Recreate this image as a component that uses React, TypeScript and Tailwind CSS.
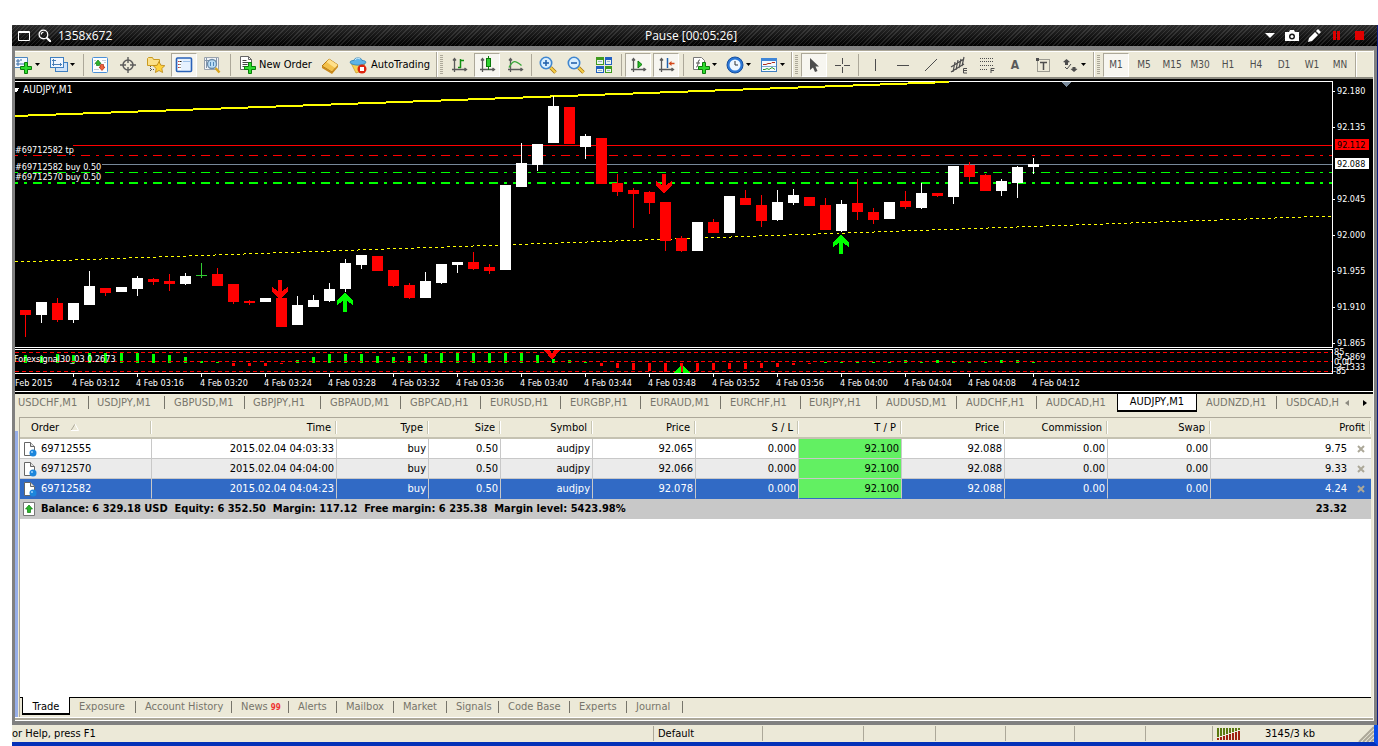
import type { ReactNode } from 'react';
import clsx from 'clsx';

type Tone = 'w' | 'r' | 'g';

// tone, body top, body bottom, wick top, wick bottom
const candles: [Tone, number, number, number, number][] = [
  ['r', 310, 315, 310, 337],
  ['w', 302, 315, 302, 323],
  ['r', 303, 320, 298, 322],
  ['w', 303, 320, 303, 323],
  ['w', 286, 305, 271, 305],
  ['r', 288, 293, 288, 296],
  ['w', 287, 292, 287, 292],
  ['w', 278, 289, 276, 296],
  ['r', 279, 282, 278, 285],
  ['r', 281, 284, 274, 291],
  ['w', 276, 284, 273, 285],
  ['g', 275, 276, 263, 278],
  ['r', 274, 286, 268, 286],
  ['r', 284, 302, 284, 304],
  ['r', 301, 303, 300, 305],
  ['w', 298, 302, 298, 302],
  ['r', 298, 327, 298, 327],
  ['w', 305, 325, 296, 325],
  ['w', 300, 307, 295, 307],
  ['w', 289, 301, 283, 302],
  ['w', 263, 289, 259, 292],
  ['w', 255, 265, 255, 269],
  ['r', 256, 271, 256, 271],
  ['r', 270, 286, 270, 287],
  ['r', 285, 298, 283, 299],
  ['w', 281, 298, 272, 298],
  ['w', 264, 283, 264, 284],
  ['w', 262, 265, 262, 273],
  ['r', 262, 269, 252, 270],
  ['r', 267, 271, 264, 274],
  ['w', 185, 270, 185, 270],
  ['w', 163, 187, 143, 187],
  ['w', 144, 165, 144, 171],
  ['w', 106, 143, 96, 143],
  ['r', 107, 144, 107, 144],
  ['w', 136, 147, 134, 159],
  ['r', 138, 184, 138, 184],
  ['r', 183, 192, 174, 196],
  ['r', 190, 194, 188, 228],
  ['r', 192, 203, 191, 214],
  ['r', 202, 241, 202, 251],
  ['r', 238, 251, 236, 252],
  ['w', 222, 251, 222, 251],
  ['r', 222, 233, 219, 233],
  ['w', 196, 233, 196, 233],
  ['r', 198, 205, 190, 205],
  ['r', 205, 221, 195, 227],
  ['w', 202, 220, 190, 221],
  ['w', 195, 203, 189, 205],
  ['r', 197, 206, 197, 206],
  ['r', 205, 230, 198, 230],
  ['w', 204, 231, 200, 232],
  ['r', 203, 212, 179, 220],
  ['r', 212, 220, 208, 224],
  ['w', 202, 219, 202, 219],
  ['r', 201, 207, 191, 209],
  ['w', 193, 208, 183, 209],
  ['r', 193, 196, 193, 197],
  ['w', 166, 197, 166, 204],
  ['r', 165, 177, 162, 182],
  ['r', 175, 191, 174, 191],
  ['w', 181, 191, 179, 196],
  ['w', 167, 183, 166, 198],
  ['w', 164, 167, 158, 174],
];

// height of each histogram bar, positive is above the zero line
const histogram = [
  8, 7, 9, 8, 10, 10, 10, 10, 9, 8, 6, 2, 1, -3, -3, -3, -1, 3, 6, 9, 9, 9, 7, 6, 7, 9, 10, 10, 10, 10, 10, 10,
  8, 4, 3, 1, -3, -5, -7, -8, -9, -9, -8, -7, -6, -6, -5, -4, -2, -1, 1, 1, 1, 1, 1, 3, 1, 3, 2, 1, 1, 3, 3, 1,
];

const toneColor: Record<Tone, string> = { w: '#ffffff', r: '#ff0000', g: '#32cd32' };

const times = [
  '03:12', '03:16', '03:20', '03:24', '03:28', '03:32', '03:36', '03:40',
  '03:44', '03:48', '03:52', '03:56', '04:00', '04:04', '04:08', '04:12',
];

const prices: [string, number][] = [
  ['92.180', 91],
  ['92.135', 127],
  ['92.045', 199],
  ['92.000', 235],
  ['91.955', 271],
  ['91.910', 307],
  ['91.865', 343],
];

const symbols = [
  'USDCHF,M1', 'USDJPY,M1', 'GBPUSD,M1', 'GBPJPY,H1', 'GBPAUD,M1', 'GBPCAD,H1', 'EURUSD,H1', 'EURGBP,H1',
  'EURAUD,M1', 'EURCHF,H1', 'EURJPY,H1', 'AUDUSD,M1', 'AUDCHF,H1', 'AUDCAD,H1', 'AUDJPY,M1', 'AUDNZD,H1',
];

const columns: [string, string][] = [
  ['Order', 'w-[132px]'],
  ['Time', 'w-[185px]'],
  ['Type', 'w-[92px]'],
  ['Size', 'w-[72px]'],
  ['Symbol', 'w-[92px]'],
  ['Price', 'w-[103px]'],
  ['S / L', 'w-[103px]'],
  ['T / P', 'w-[103px]'],
  ['Price', 'w-[103px]'],
  ['Commission', 'w-[103px]'],
  ['Swap', 'w-[103px]'],
  ['Profit', ''],
];

const orders = [
  ['69712555', '2015.02.04 04:03:33', 'buy', '0.50', 'audjpy', '92.065', '0.000', '92.100', '92.088', '0.00', '0.00', '9.75'],
  ['69712570', '2015.02.04 04:04:00', 'buy', '0.50', 'audjpy', '92.066', '0.000', '92.100', '92.088', '0.00', '0.00', '9.33'],
  ['69712582', '2015.02.04 04:04:23', 'buy', '0.50', 'audjpy', '92.078', '0.000', '92.100', '92.088', '0.00', '0.00', '4.24'],
];

const terminalTabs: [string, string][] = [
  ['Exposure', 'w-[66px]'],
  ['Account History', 'w-[96px]'],
  ['News', 'w-[57px]'],
  ['Alerts', 'w-[48px]'],
  ['Mailbox', 'w-[57px]'],
  ['Market', 'w-[53px]'],
  ['Signals', 'w-[52px]'],
  ['Code Base', 'w-[71px]'],
  ['Experts', 'w-[57px]'],
  ['Journal', 'w-[56px]'],
];

/* ---------- toolbar icons, 18x18 ---------- */

function Svg({ children }: { children: ReactNode }) {
  return (
    <svg width="18" height="18" viewBox="0 0 18 18" fill="none" className="shrink-0" aria-hidden="true">
      {children}
    </svg>
  );
}

const Plus = () => (
  <path d="M10.500 6.500h3v4h4v3h-4v4h-3v-4h-4v-3h4z" fill="#2fdc2f" stroke="#0a7d0a" />
);

const NewChartIcon = () => (
  <Svg>
    <path d="M0 1.500h12.500v10H0" fill="#f4f9ff" stroke="#4a86c0" />
    <path d="M3 3v7M1 8h9M6 3v2M1 5h4" stroke="#3c6ea5" />
    <g transform="translate(-1 0)"><Plus /></g>
  </Svg>
);

const ProfilesIcon = () => (
  <Svg>
    <rect x="5.500" y="6.500" width="12" height="9" fill="#cfe3f8" stroke="#3f7fc0" />
    <rect x="0.500" y="1.500" width="13" height="10" fill="#f2f8ff" stroke="#3f7fc0" />
    <path d="M1 11h12v1H1z" fill="#3f7fc0" />
    <path d="M3.500 3v7M2 8.500h10M10.500 7v3M2 4.500h4" stroke="#4a7fb5" />
  </Svg>
);

const MarketWatchIcon = () => (
  <Svg>
    <rect x="1.500" y="1.500" width="15" height="15" rx="1" fill="#fdfeff" stroke="#4a90d9" />
    <path d="M3 4.500h2M3 8.500h1M3 13.500h5M11 4.500h4M13 6.500h2" stroke="#c3cdd8" />
    <path d="M7 4l3 3.500H8.500v2h-3v-2H4z" fill="#2cb52c" stroke="#127a12" strokeWidth=".7" />
    <path d="M11 14.500l3-3.500h-1.500V8.500h-3V11H8z" fill="#f0643c" stroke="#b02a10" strokeWidth=".7" />
  </Svg>
);

const CrosshairIcon = () => (
  <Svg>
    <circle cx="9" cy="9" r="5" stroke="#5c5c5c" strokeWidth="1.500" />
    <path d="M9 1v6M9 11v6M1 9h6M11 9h6" stroke="#5c5c5c" strokeWidth="1.400" />
  </Svg>
);

const NavigatorIcon = () => (
  <Svg>
    <path d="M.5 9.500v-7l1-1h4l1 2h6v6z" fill="#fbe08a" stroke="#c99a20" />
    <path d="M3.500 10v6M4 13.500h4" stroke="#555" strokeDasharray="1 1" />
    <path d="M12 5.500l1.800 3.700 4 .5-3 2.800.8 4-3.600-2-3.600 2 .8-4-3-2.800 4-.5z" fill="#ffd23c" stroke="#b98410" strokeWidth=".8" />
  </Svg>
);

const TerminalIcon = () => (
  <Svg>
    <rect x="1.500" y="2" width="15" height="13.500" rx="1" fill="#e6f2ff" stroke="#2a62b8" strokeWidth="1.600" />
    <rect x="3" y="4" width="3" height="10" fill="#fff" />
    <path d="M3 5.500h1M3 8.500h1M3 11.500h1" stroke="#d33" />
    <path d="M4.500 5.500h2M4.500 8.500h1M4.500 11.500h1" stroke="#222" />
    <path d="M8 5.500h7" stroke="#9ec2ea" />
  </Svg>
);

const TesterIcon = () => (
  <Svg>
    <path d="M1.500 1.500h14v12h-14z" fill="#f2f4f7" stroke="#9aa3ad" />
    <path d="M3.500 2v10M2 4.500h4M13.500 2v8" stroke="#8296ab" />
    <circle cx="9" cy="8" r="4.500" fill="#b9dcf6" stroke="#6b8ba8" strokeWidth="1.300" />
    <path d="M7.500 6v4M10.500 6v4" stroke="#4f87b9" />
    <path d="M12.500 12l4 4.500" stroke="#d8a41c" strokeWidth="2.500" />
  </Svg>
);

const NewOrderIcon = () => (
  <Svg>
    <path d="M2.500.5h8l3 3v10h-11z" fill="#fff" stroke="#666" />
    <path d="M10.500.5v3h3" stroke="#666" />
    <path d="M4.500 4.500h4M4.500 6.500h7M4.500 8.500h5M4.500 10.500h3" stroke="#444" />
    <Plus />
  </Svg>
);

const EditorIcon = () => (
  <Svg>
    <path d="M1 10l7-7 9 6-6 7z" fill="#f3c14b" stroke="#b47812" />
    <path d="M8 3l9 6-3 3-8.500-6z" fill="#ffe08a" />
    <path d="M1 10l10 6 6-7v2l-6 7-10-6z" fill="#c98a1b" />
  </Svg>
);

const AutoTradingIcon = () => (
  <Svg>
    <path d="M2 7h14l-3 8-6 2z" fill="#f7d155" stroke="#c89a1c" strokeWidth=".7" />
    <path d="M1 6.500c0-2 3-2 4-2C5 1 13 1 13 4.500c2 0 4 .5 4 2C15 10 3 10 1 6.500z" fill="#5fb3e6" stroke="#2d7fb6" strokeWidth=".8" />
    <path d="M6 4c1-2 4-2 5-1" stroke="#c9ebff" />
    <circle cx="13" cy="13" r="4.500" fill="#dd2510" />
    <rect x="11" y="11" width="4" height="4" fill="#fff" />
  </Svg>
);

const Axes = () => (
  <path d="M4.500 3v13M2 13.500h14M3 4.500l1.500-2L6 4.500M14.500 12l2 1.500-2 1.500" stroke="#5a5a5a" strokeWidth="1.300" />
);

const BarChartIcon = () => (
  <Svg>
    <Axes />
    <path d="M10.500 3v9M10 4.500h4M8 11.500h3" stroke="#129012" strokeWidth="1.500" />
  </Svg>
);

const CandleChartIcon = () => (
  <Svg>
    <Axes />
    <path d="M10.500 0v14" stroke="#0b7a0b" />
    <rect x="8.500" y="2.500" width="4" height="8" fill="#2ed02e" stroke="#0b7a0b" />
  </Svg>
);

const LineChartIcon = () => (
  <Svg>
    <Axes />
    <path d="M3 11.500C7 4 9 4 15.500 9.500" stroke="#3aa83a" strokeWidth="1.400" />
  </Svg>
);

const ZoomIcon = ({ plus }: { plus?: boolean }) => (
  <Svg>
    <path d="M11.500 11.500l5 5" stroke="#a87410" strokeWidth="3.500" />
    <path d="M11.500 11.500l5 5" stroke="#f5d04a" strokeWidth="2" />
    <circle cx="7" cy="7" r="5.700" fill="#d9efff" stroke="#3f86cf" strokeWidth="1.600" />
    <path d="M4 7h6" stroke="#2563ad" strokeWidth="1.600" />
    {plus && <path d="M7 4v6" stroke="#2563ad" strokeWidth="1.600" />}
  </Svg>
);

const TileIcon = () => (
  <Svg>
    <path d="M1 1h8v8H1zM10 10h7v7h-7z" fill="#3f9a1e" />
    <path d="M10 1h7v8h-7zM1 10h8v7H1z" fill="#2160c0" />
    <path d="M2 4h6v4H2zM11 4h5v4h-5zM2 13h6v3H2zM11 13h5v3h-5z" fill="#edf6ee" />
    <path d="M3 5.500h4M12 5.500h3M3 14.500h4M12 14.500h3" stroke="#9ab6c8" />
  </Svg>
);

const AutoScrollIcon = () => (
  <Svg>
    <Axes />
    <path d="M9 5l4 3.500L9 12z" fill="#2cc02c" stroke="#0b7a0b" />
  </Svg>
);

const ShiftIcon = () => (
  <Svg>
    <Axes />
    <path d="M10.500 2v10" stroke="#1d62b0" strokeWidth="1.500" />
    <path d="M11.500 7.500l3-2.500v1.800h3v1.500h-3V10z" fill="#d4491a" />
  </Svg>
);

const IndicatorsIcon = () => (
  <Svg>
    <path d="M1.500 1.500h8l3 3v9h-11z" fill="#fff" stroke="#777" />
    <path d="M8 4c-3-1-1 8-4 7M4 7h4" stroke="#555" />
    <Plus />
  </Svg>
);

const ClockIcon = () => (
  <Svg>
    <circle cx="9" cy="9" r="8" fill="#2b78d8" stroke="#174f9e" />
    <circle cx="9" cy="9" r="5.500" fill="#eef6ff" />
    <path d="M9 5v4h3" stroke="#333" />
  </Svg>
);

const TemplateIcon = () => (
  <Svg>
    <rect x="1.500" y="2.500" width="15" height="13" fill="#f6fbff" stroke="#3f7fc0" />
    <path d="M1 2h16v3H1z" fill="#3f86d8" />
    <path d="M3 8.500h3l2-1h3l1-1h3" stroke="#b03020" />
    <path d="M3 13.500h2l2-1 2 1 3-2 3 2" stroke="#2a9a2a" />
    <path d="M2 10.500h14" stroke="#7fa9d2" />
  </Svg>
);

const CursorIcon = () => (
  <Svg>
    <path d="M5 2v12l3-2.500 2 4.500 2.500-1-2-4.500H14z" fill="#4d4d4d" />
  </Svg>
);

const CrossIcon = () => (
  <Svg>
    <path d="M9.500 2v6M9.500 11v6M2 9.500h6M11 9.500h6" stroke="#4d4d4d" />
  </Svg>
);

const ChannelIcon = () => (
  <Svg>
    <path d="M1 11L14 3M1 16L14 8M5 6L3 16M8 4L6 14M11 3L9 12M14 1l-2 9" stroke="#4d4d4d" strokeWidth="1.200" />
    <path d="M17 12.500h-3.500v4.500H17M14 14.500h3" stroke="#4d4d4d" />
  </Svg>
);

const FiboIcon = () => (
  <Svg>
    <path d="M2 2.500h14M2 5.500h14M2 9.500h14M2 13.500h8" stroke="#4d4d4d" strokeDasharray="1 1" />
    <path d="M16.500 12.500h-3.500V17M13 14.500h3" stroke="#4d4d4d" />
  </Svg>
);

const LabelIcon = () => (
  <Svg>
    <rect x="3.500" y="3.500" width="12" height="12" stroke="#4d4d4d" strokeDasharray="1 1" />
    <path d="M2 2h3v3H2z" fill="#4d4d4d" />
    <path d="M6 6.500h7M9.500 6v8" stroke="#4d4d4d" strokeWidth="1.500" />
  </Svg>
);

const ArrowsIcon = () => (
  <Svg>
    <path d="M5.500 3l3.500 3-2 .5V9H4V6.500L2 6z" fill="#4d4d4d" />
    <path d="M13 16l3.500-3-2-.5V11h-3v1.500l-2 .5z" fill="#4d4d4d" />
    <path d="M4 11l2 2 4-5" stroke="#4d4d4d" />
  </Svg>
);

/* ---------- toolbar parts ---------- */

const pressedClass =
  'border border-[#aca899] border-r-white border-b-white bg-[#f7f6f0]';

function Tool({ label, pressed, children }: { label: string; pressed?: boolean; children: ReactNode }) {
  return (
    <button
      type="button"
      aria-label={label}
      aria-pressed={pressed}
      className={clsx('flex h-[24px] items-center justify-center', pressed ? ['mx-px w-[26px]', pressedClass] : 'w-7')}
    >
      {children}
    </button>
  );
}

function DropTool({ label, className, children }: { label: string; className?: string; children: ReactNode }) {
  return (
    <button type="button" aria-label={label} className={clsx('flex h-[24px] shrink-0 items-center gap-[2px]', className)}>
      {children}
      <svg width="5" height="3" viewBox="0 0 5 3"><path d="M0 0h5L2.500 3z" fill="#000" /></svg>
    </button>
  );
}

const Sep = ({ className }: { className: string }) => <span className={clsx('h-[22px] w-px bg-[#aca899]', className)} />;

function GroupEnd() {
  return (
    <>
      <span className="h-[25px] w-[2px] border-l border-[#aca899] bg-white" />
      <span className="mx-[2px] h-[19px] w-[3px] bg-[repeating-linear-gradient(to_bottom,#aca899_0_1px,#ece9d8_1px_2px)]" />
    </>
  );
}

function Toolbar() {
  return (
    <div className="flex h-7 shrink-0 items-center overflow-hidden border-t border-b-2 border-t-white border-b-[#8c8a80] bg-[#ece9d8]">
      <DropTool label="New chart"><NewChartIcon /></DropTool>
      <DropTool label="Profiles" className="ml-[10px]"><ProfilesIcon /></DropTool>
      <Sep className="mr-[2px] ml-2" />
      <Tool label="Market Watch"><MarketWatchIcon /></Tool>
      <Tool label="Data Window"><CrosshairIcon /></Tool>
      <Tool label="Navigator"><NavigatorIcon /></Tool>
      <Tool label="Terminal" pressed><TerminalIcon /></Tool>
      <Tool label="Strategy Tester"><TesterIcon /></Tool>
      <Sep className="mr-[7px] ml-1" />
      <button type="button" className="flex w-[78px] shrink-0 items-center gap-[3px] whitespace-nowrap">
        <NewOrderIcon />New Order
      </button>
      <Tool label="MetaEditor"><EditorIcon /></Tool>
      <button type="button" className="flex w-[92px] shrink-0 items-center gap-1 pl-[5px] whitespace-nowrap">
        <AutoTradingIcon />AutoTrading
      </button>
      <GroupEnd />
      <Tool label="Bar chart"><BarChartIcon /></Tool>
      <Tool label="Candlesticks" pressed><CandleChartIcon /></Tool>
      <Tool label="Line chart"><LineChartIcon /></Tool>
      <Sep className="mx-[2px]" />
      <Tool label="Zoom in"><ZoomIcon plus /></Tool>
      <Tool label="Zoom out"><ZoomIcon /></Tool>
      <Tool label="Tile windows"><TileIcon /></Tool>
      <Sep className="mr-[2px] ml-[3px]" />
      <Tool label="Auto scroll" pressed><AutoScrollIcon /></Tool>
      <Tool label="Chart shift" pressed><ShiftIcon /></Tool>
      <Sep className="mr-2 ml-[3px]" />
      <DropTool label="Indicators"><IndicatorsIcon /></DropTool>
      <DropTool label="Periods" className="ml-[9px]"><ClockIcon /></DropTool>
      <DropTool label="Templates" className="mr-[6px] ml-[9px]"><TemplateIcon /></DropTool>
      <GroupEnd />
      <Tool label="Cursor" pressed><CursorIcon /></Tool>
      <Tool label="Crosshair"><CrossIcon /></Tool>
      <Sep className="mx-[2px]" />
      <Tool label="Vertical line"><Svg><path d="M9.500 3v12" stroke="#4d4d4d" /></Svg></Tool>
      <Tool label="Horizontal line"><Svg><path d="M3 9.500h12" stroke="#4d4d4d" /></Svg></Tool>
      <Tool label="Trendline"><Svg><path d="M3 15L15 3" stroke="#4d4d4d" /></Svg></Tool>
      <Tool label="Channel"><ChannelIcon /></Tool>
      <Tool label="Fibonacci"><FiboIcon /></Tool>
      <Tool label="Text"><span className="text-[12px] font-bold text-[#5a5a5a]">A</span></Tool>
      <Tool label="Text label"><LabelIcon /></Tool>
      <DropTool label="Arrows" className="mr-[7px] ml-1"><ArrowsIcon /></DropTool>
      <GroupEnd />
      {['M1', 'M5', 'M15', 'M30', 'H1', 'H4', 'D1', 'W1', 'MN'].map((tf) => (
        <button
          key={tf}
          type="button"
          className={clsx(
            'flex h-[24px] items-center justify-center text-[10px] text-[#4d4d4d]',
            tf === 'M1' ? ['mx-px w-[26px]', pressedClass] : 'w-7',
          )}
        >
          {tf}
        </button>
      ))}
      <span className="ml-px h-[25px] w-[2px] border-l border-[#aca899] bg-white" />
    </div>
  );
}

/* ---------- chart ---------- */

const UP = 'M8 0L16 7V12L10 8V19H6V8L0 12V7Z';
const DOWN = 'M8 19L16 12V7L10 11V0H6V11L0 7V12Z';

function Chart() {
  return (
    <div className="flex h-[314px] shrink-0 bg-black text-[9px]">
      <svg height="314" className="min-w-0 flex-1" fill="#fff" shapeRendering="crispEdges" role="img" aria-label="AUDJPY,M1">
        <svg x="-15" y="-79" width="100%" height="400" overflow="visible">
          <rect x="15" y="81" width="100%" height="1" />
          <rect x="15" y="347" width="100%" height="1" />
          <rect x="15" y="349" width="100%" height="1" />
          <rect x="15" y="373" width="100%" height="1" />
          <rect x="15" y="391" width="100%" height="1" />

          <path d="M15 116L949 82" stroke="#ff0" strokeWidth="2" />
          <path d="M15 262L1332 216" stroke="#ff0" strokeDasharray="3 3" />
          <rect x="73" y="145" width="100%" height="1" fill="#f00" />
          <rect x="102" y="164" width="100%" height="1" fill="#778899" />
          <g strokeDasharray="9 6 3 6" strokeDashoffset="6">
            <path d="M15 155.500H3000" stroke="#f00" />
            <path d="M15 172.500H3000" stroke="#0f0" />
            <path d="M15 183H3000" stroke="#0f0" strokeWidth="2" />
          </g>

          {candles.map(([tone, top, bottom, high, low], i) => (
            <g key={i} fill={toneColor[tone]}>
              <rect x={25 + i * 16} y={high} width="1" height={low - high} />
              <rect x={20 + i * 16} y={top} width="11" height={bottom - top} />
            </g>
          ))}

          <path d={DOWN} transform="translate(272 280)" fill="#f00" />
          <path d={DOWN} transform="translate(656 174)" fill="#f00" />
          <path d={UP} transform="translate(337 293)" fill="#0f0" />
          <path d={UP} transform="translate(833 235)" fill="#0f0" />
          <path d="M1061 82h10l-5 5z" fill="#778899" />
          <path d="M15 88h4l-2 4h-2z" />

          {histogram.map((h, i) => (
            <rect
              key={i}
              x={24 + i * 16}
              y={h > 0 ? 363 - h : 363}
              width="3"
              height={Math.abs(h)}
              fill={h > 0 ? '#0f0' : '#f00'}
            />
          ))}
          <g stroke="#f00" strokeDasharray="4 3">
            <path d="M15 352.500H3000M15 361.500H3000M15 371.500H3000" />
          </g>
          <path d="M544 350h6l2 4 2-4h6l-8 10z" fill="#f00" />
          <path d="M673 373l8-8v8zM683 373v-8l7 8z" fill="#0f0" />

          <g shapeRendering="auto">
            <text x="23" y="93" fontSize="10">AUDJPY,M1</text>
            <text x="15" y="153">#69712582 tp</text>
            <text x="15" y="170">#69712582 buy 0.50</text>
            <text x="15" y="180">#69712570 buy 0.50</text>
            <text x="14" y="362">Forexsignal30_03 0.2673</text>
            <text x="15" y="386">Feb 2015</text>
          </g>
          {times.map((t, i) => (
            <g key={t}>
              <rect x={73 + i * 64} y="374" width="1" height="3" />
              <text x={72 + i * 64} y="386">4 Feb {t}</text>
            </g>
          ))}
        </svg>
      </svg>
      <svg width="41" height="314" viewBox="1332 79 41 314" className="shrink-0" fill="#fff" shapeRendering="crispEdges">
        <path d="M1332 81h1v267h-1zM1332 349h1v25h-1zM1332 391h41v1h-41z" />
        {prices.map(([label, y]) => (
          <g key={label}>
            <rect x="1333" y={y} width="2" height="1" />
            <text x="1337" y={y + 3}>{label}</text>
          </g>
        ))}
        <rect x="1335" y="139" width="34" height="11" fill="#f00" />
        <text x="1337" y="148" fill="#000">92.112</text>
        <rect x="1335" y="158" width="34" height="11" />
        <text x="1337" y="167" fill="#000">92.088</text>
        <text x="1334" y="355">85</text>
        <text x="1337" y="360">9.5869</text>
        <text x="1334" y="365">0.00</text>
        <text x="1334" y="370">-3.1333</text>
        <text x="1333" y="374">-85</text>
      </svg>
    </div>
  );
}

function SymbolTabs() {
  return (
    <div className="flex h-6 shrink-0 border-t border-black bg-[#ece9d8] text-[#77756b]">
      <div className="flex min-w-0 flex-1 overflow-hidden">
        {symbols.map((s, i) => {
          if (s === 'AUDJPY,M1') {
            return (
              <button
                key={s}
                type="button"
                className="-mt-px flex h-[19px] w-20 shrink-0 items-center justify-center border border-t-0 border-b-2 border-black bg-white text-black"
              >
                {s}
              </button>
            );
          }
          const width = i === 0 ? 'w-[74px] pl-[3px]' : s.includes('JPY') ? 'w-[76px] pl-2' : 'w-20 pl-[9px]';
          const last = s === 'AUDCAD,H1';
          return (
            <button key={s} type="button" className={clsx('flex h-[17px] shrink-0 items-center justify-between', width)}>
              {s}
              {!last && <span className="h-[13px] w-px bg-[#77756b]" />}
            </button>
          );
        })}
        <button type="button" className="flex h-[17px] items-center pl-[9px]">USDCAD,H</button>
      </div>
      <div className="flex h-[17px] shrink-0 items-center gap-[14px] pr-[6px] pl-1">
        <button type="button" aria-label="Scroll left">
          <svg width="4" height="6" viewBox="0 0 4 6" className="block"><path d="M4 0v6L0 3z" fill="#8d8b80" /></svg>
        </button>
        <button type="button" aria-label="Scroll right">
          <svg width="4" height="6" viewBox="0 0 4 6" className="block"><path d="M0 0v6l4-3z" fill="#000" /></svg>
        </button>
      </div>
    </div>
  );
}

/* ---------- terminal ---------- */

const OrderIcon = () => (
  <svg width="14" height="16" viewBox="0 0 14 16" className="shrink-0">
    <path d="M1.500 1.500h6l4 4v9h-10z" fill="#fff" stroke="#666" />
    <path d="M7.500 1.500v4h4" fill="#ddd" stroke="#666" />
    <circle cx="10" cy="12" r="3.500" fill="#1d86dc" />
    <circle cx="9" cy="11" r="1" fill="#9bd2ff" />
  </svg>
);

function OrdersTable() {
  return (
    <table className="w-full table-fixed border-separate border-spacing-0">
      <thead>
        <tr className="h-[21px]">
          {columns.map(([name, width], i) => (
            <th
              key={i}
              className={clsx(
                'border-b-2 border-[#c5c2b2] bg-[#ece9d8] p-0 font-normal',
                width,
                i === 0 ? 'pl-[11px] text-left' : 'text-right',
              )}
            >
              <span className="flex items-center">
                <span className={clsx(i === 0 ? 'mr-3' : 'ml-auto mr-1')}>{name}</span>
                {i === 0 && (
                  <svg width="8" height="7" viewBox="0 0 8 7" className="mr-auto" fill="none">
                    <path d="M0 6.500L4 0" stroke="#aca899" /><path d="M4 0l3.500 6.500H0" stroke="#fff" />
                  </svg>
                )}
                <span className="h-[13px] w-[2px] border-l border-[#c7c5b2] bg-white" />
              </span>
            </th>
          ))}
        </tr>
      </thead>
      <tbody>
        {orders.map((row, r) => {
          const selected = r === 2;
          return (
            <tr key={row[0]} className={clsx('h-5', selected ? 'bg-[#316ac5] text-white' : r === 1 ? 'bg-[#ebebeb]' : 'bg-white')}>
              {row.map((value, c) => (
                <td
                  key={c}
                  className={clsx(
                    'border-[#c8c8c8] p-0',
                    c < 11 && 'border-r',
                    selected ? 'border-b border-b-[#316ac5]' : 'border-b',
                    c === 0 ? 'pl-[3px]' : 'pr-[2px] text-right',
                    c === 7 && 'bg-[#62f062] text-black',
                  )}
                >
                  {c === 0 && <span className="flex items-center gap-1"><OrderIcon />{value}</span>}
                  {c > 0 && c < 11 && value}
                  {c === 11 && (
                    <span className="flex items-center justify-end gap-[10px] pr-1">
                      {value}
                      <button type="button" aria-label={`Close ${row[0]}`}>
                        <svg width="8" height="8" viewBox="0 0 8 8" className="block">
                          <path d="M1 1l6 6M7 1L1 7" stroke="#aca899" strokeWidth="2" />
                        </svg>
                      </button>
                    </span>
                  )}
                </td>
              ))}
            </tr>
          );
        })}
        <tr className="h-5 bg-[#c8c8c8] font-bold">
          <td colSpan={11} className="p-0 pl-[3px]">
            <span className="flex items-center gap-[6px] whitespace-pre">
              <svg width="12" height="14" viewBox="0 0 12 14" className="shrink-0">
                <path d="M.5.5h11v13H.5z" fill="#fff" stroke="#777" />
                <path d="M6 3l3.500 4H7.500v3.500h-3V7h-2z" fill="#2cb52c" stroke="#0b7a0b" strokeWidth=".7" />
              </svg>
              {'Balance: 6 329.18 USD  Equity: 6 352.50  Margin: 117.12  Free margin: 6 235.38  Margin level: 5423.98%'}
            </span>
          </td>
          <td className="p-0 pr-6 text-right">23.32</td>
        </tr>
      </tbody>
    </table>
  );
}

function Terminal() {
  return (
    <div className="flex min-h-0 flex-1 bg-[#ece9d8] pr-[2px]">
      <div className="mt-[14px] mr-px w-[3px] bg-[#97aee8]" />
      <div className="flex min-w-0 flex-1 flex-col border-t border-l border-[#aca899]">
        <div className="min-h-0 flex-1 border-b border-black bg-white"><OrdersTable /></div>
        <div className="flex h-[19px] shrink-0 pl-[2px] text-[#77756b]">
          <button type="button" className="-mt-px h-[18px] w-12 border border-t-0 border-b-2 border-black bg-white pt-[3px] text-black">
            Trade
          </button>
          {terminalTabs.map(([name, width]) => (
            <button key={name} type="button" className={clsx('flex h-[18px] shrink-0 items-center justify-between whitespace-nowrap pl-[9px]', width)}>
              <span>
                {name}
                {name === 'News' && <b className="ml-[3px] text-[8px] text-[#e33]">99</b>}
              </span>
              <span className="h-3 w-px bg-[#77756b]" />
            </button>
          ))}
        </div>
      </div>
    </div>
  );
}

function StatusBar() {
  const cell = 'h-[15px] border-l border-[#aca899]';
  return (
    <div className="flex h-[17px] shrink-0 items-center bg-[#ece9d8]">
      <span className="min-w-0 flex-1">or Help, press F1</span>
      <span className={clsx(cell, 'w-[109px] pl-1 leading-[15px]')}>Default</span>
      <span className={clsx(cell, 'w-[101px]')} />
      <span className={clsx(cell, 'w-[72px]')} />
      <span className={clsx(cell, 'w-[70px]')} />
      <span className={clsx(cell, 'w-[69px]')} />
      <span className={clsx(cell, 'w-[71px]')} />
      <span className={clsx(cell, 'w-[67px]')} />
      <span className={clsx(cell, 'flex w-[146px] items-center pl-1')}>
        <svg width="24" height="12" viewBox="0 0 24 12" shapeRendering="crispEdges">
          {[0, 1, 2, 3, 4, 5, 6, 7].map((i) => (
            <g key={i}>
              <rect x={i * 3} y="0" width="2" height={9 - i} fill="#5b7a10" />
              <rect x={i * 3} y={10 - i} width="2" height={2 + i} fill="#a02010" />
            </g>
          ))}
        </svg>
        <span className="ml-6">3145/3 kb</span>
      </span>
      <svg width="16" height="16" viewBox="0 0 16 16" className="shrink-0">
        <path d="M1 16L16 1M5 16L16 5M9 16l7-7M13 16l3-3" stroke="#aca899" strokeWidth="2" />
      </svg>
    </div>
  );
}

function RecorderBar() {
  return (
    <header className="flex h-[21px] shrink-0 items-center bg-[repeating-linear-gradient(135deg,#ffffff1c_0_1px,transparent_1px_3px),linear-gradient(#2c2c2c,#000)] pr-[13px] font-['Open_Sans',sans-serif] text-[12px] text-white">
      <div className="flex flex-1 items-center gap-2 pl-[6px]">
        <svg width="12" height="10" viewBox="0 0 12 10" fill="none"><path d="M.5.5h11v9H.5zM0 1.500h12" stroke="#fff" /></svg>
        <svg width="13" height="13" viewBox="0 0 12 12" fill="none" stroke="#fff">
          <circle cx="5" cy="5" r="4" strokeWidth="1.200" /><path d="M8 8l4 4" strokeWidth="2" /><path d="M3 5c0-1 1-2 2-2" />
        </svg>
        <span className="-ml-px">1358x672</span>
      </div>
      <span>Pause [00:05:26]</span>
      <div className="flex flex-1 items-center justify-end">
        <svg width="10" height="5" viewBox="0 0 10 5" className="mr-[10px]"><path d="M0 0h10L5 5z" fill="#fff" /></svg>
        <svg width="14" height="12" viewBox="0 0 14 12" className="mr-[9px]">
          <path d="M0 2h4l1-2h4l1 2h4v9H0z" fill="#fff" /><circle cx="7" cy="6.500" r="3" fill="#1a1a1a" /><circle cx="7" cy="6.500" r="1.500" fill="#fff" />
        </svg>
        <svg width="13" height="13" viewBox="0 0 13 13" className="mr-[12px]">
          <path d="M0 13l1-4 6-6 3 3-6 6zM8 2l2-2 3 3-2 2z" fill="#fff" />
        </svg>
        <svg width="7" height="9" viewBox="0 0 7 9" className="mr-[15px]"><path d="M0 0h3v9H0zM4 0h3v9H4z" fill="#d00" /></svg>
        <svg width="9" height="9" viewBox="0 0 9 9"><path d="M0 0h9v9H0z" fill="#e00000" /></svg>
      </div>
    </header>
  );
}

export default function App() {
  return (
    <div className="flex h-screen flex-col bg-white pt-[25px] pl-3 font-['DejaVu_Sans_Condensed','DejaVu_Sans',sans-serif] text-[11px] leading-[14px] text-black">
      <div className="flex min-h-0 flex-1 flex-col border-r border-[#0a1a80]">
        <RecorderBar />
        <div className="flex min-h-0 flex-1 flex-col border-x-[3px] border-t-4 border-b-4 border-[#808080]">
          <div className="flex min-h-0 flex-1 flex-col border-t border-r border-t-[#aca899] border-r-[#f5f3ea]">
            <Toolbar />
            <Chart />
            <SymbolTabs />
            <Terminal />
            <div className="h-[4px] shrink-0 border-y border-t-white border-b-white bg-[#aca899]" />
          </div>
        </div>
      </div>
      <div className="shrink-0 border-r-4 border-b-4 border-r-[#0a4ce8] border-b-[#0431b8]">
        <StatusBar />
      </div>
    </div>
  );
}
